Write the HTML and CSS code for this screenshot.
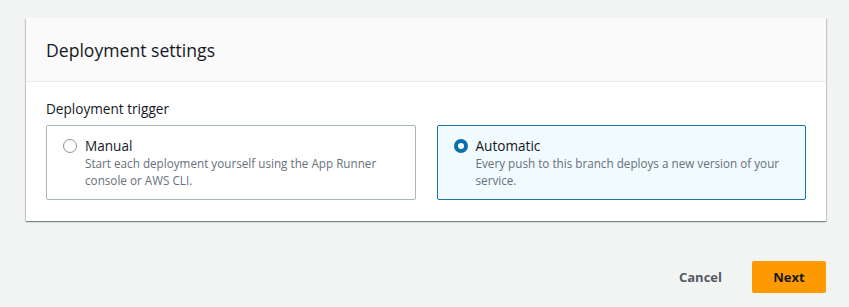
FILE: index.html
```html
<!DOCTYPE html>
<html>
<head>
<meta charset="utf-8">
<link rel="stylesheet" href="styles.css">
</head>
<body>
<div class="page">
  <section class="card">
    <header class="card-header">
      <h2 class="card-title">Deployment settings</h2>
    </header>
    <div class="card-body">
      <div class="field-label">Deployment trigger</div>
      <div class="tiles">
        <label class="tile">
          <span class="radio"></span>
          <span class="tile-text">
            <span class="tile-label">Manual</span>
            <span class="tile-desc">Start each deployment yourself using the App Runner console or AWS CLI.</span>
          </span>
        </label>
        <label class="tile tile-selected">
          <span class="radio radio-checked"></span>
          <span class="tile-text">
            <span class="tile-label">Automatic</span>
            <span class="tile-desc">Every push to this branch deploys a new version of your service.</span>
          </span>
        </label>
      </div>
    </div>
  </section>
  <div class="actions">
    <button class="btn btn-link">Cancel</button>
    <button class="btn btn-primary">Next</button>
  </div>
</div>
</body>
</html>
```

FILE: styles.css
```css
html, body {
  margin: 0;
  padding: 0;
  background: #f2f3f3;
  font-family: "Open Sans", "Noto Sans", sans-serif;
  color: #16191f;
}

.page {
  padding: 18px 23px 0 26px;
}

.card {
  background: #ffffff;
  width: 800px;
  box-shadow: 0 1px 1px 0 rgba(0, 28, 36, 0.3), 1px 1px 1px 0 rgba(0, 28, 36, 0.15), -1px 1px 1px 0 rgba(0, 28, 36, 0.15);
}

.card-header {
  background: #fafafa;
  border-bottom: 1px solid #eaeded;
  height: 63px;
  display: flex;
  align-items: center;
  padding: 0 20px;
}

.card-title {
  margin: 0;
  font-size: 17.6px;
  font-weight: 400;
  line-height: 22px;
  color: #16191f;
}

.card-body {
  padding: 18px 20px 21px 20px;
}

.field-label {
  font-size: 13.6px;
  line-height: 18px;
  color: #16191f;
  margin-bottom: 7px;
}

.tiles {
  display: grid;
  grid-template-columns: 1fr 1fr;
  gap: 21px;
}

.tile {
  display: flex;
  align-items: flex-start;
  gap: 8px;
  border: 1px solid #aab7b8;
  border-radius: 2px;
  padding: 10px 16px 12px 16px;
  height: 75px;
  box-sizing: border-box;
}

.tile-selected {
  border-color: #1b77a8;
  background: #f0faff;
}

.radio {
  flex: none;
  width: 14px;
  height: 14px;
  box-sizing: border-box;
  border: 1.5px solid #879596;
  border-radius: 50%;
  background: #fff;
  margin-top: 3px;
}

.radio-checked {
  border: 4px solid #0a6fae;
}

.tile-text {
  display: flex;
  flex-direction: column;
}

.tile-label {
  font-size: 13.6px;
  line-height: 19px;
  color: #16191f;
}

.tile-desc {
  font-size: 11.7px;
  line-height: 17px;
  color: #687078;
}

.actions {
  display: flex;
  justify-content: flex-end;
  align-items: center;
  gap: 20px;
  width: 800px;
  margin-top: 40px;
}

.btn {
  font-family: "Open Sans", "Noto Sans", sans-serif;
  font-size: 13px;
  font-weight: 700;
  border: none;
  background: none;
  cursor: pointer;
}

.btn-link {
  color: #545b64;
  padding: 0 10px;
  height: 32px;
}

.btn-primary {
  background: #ff9900;
  color: #16191f;
  border-radius: 2px;
  width: 74px;
  height: 32px;
}
```
